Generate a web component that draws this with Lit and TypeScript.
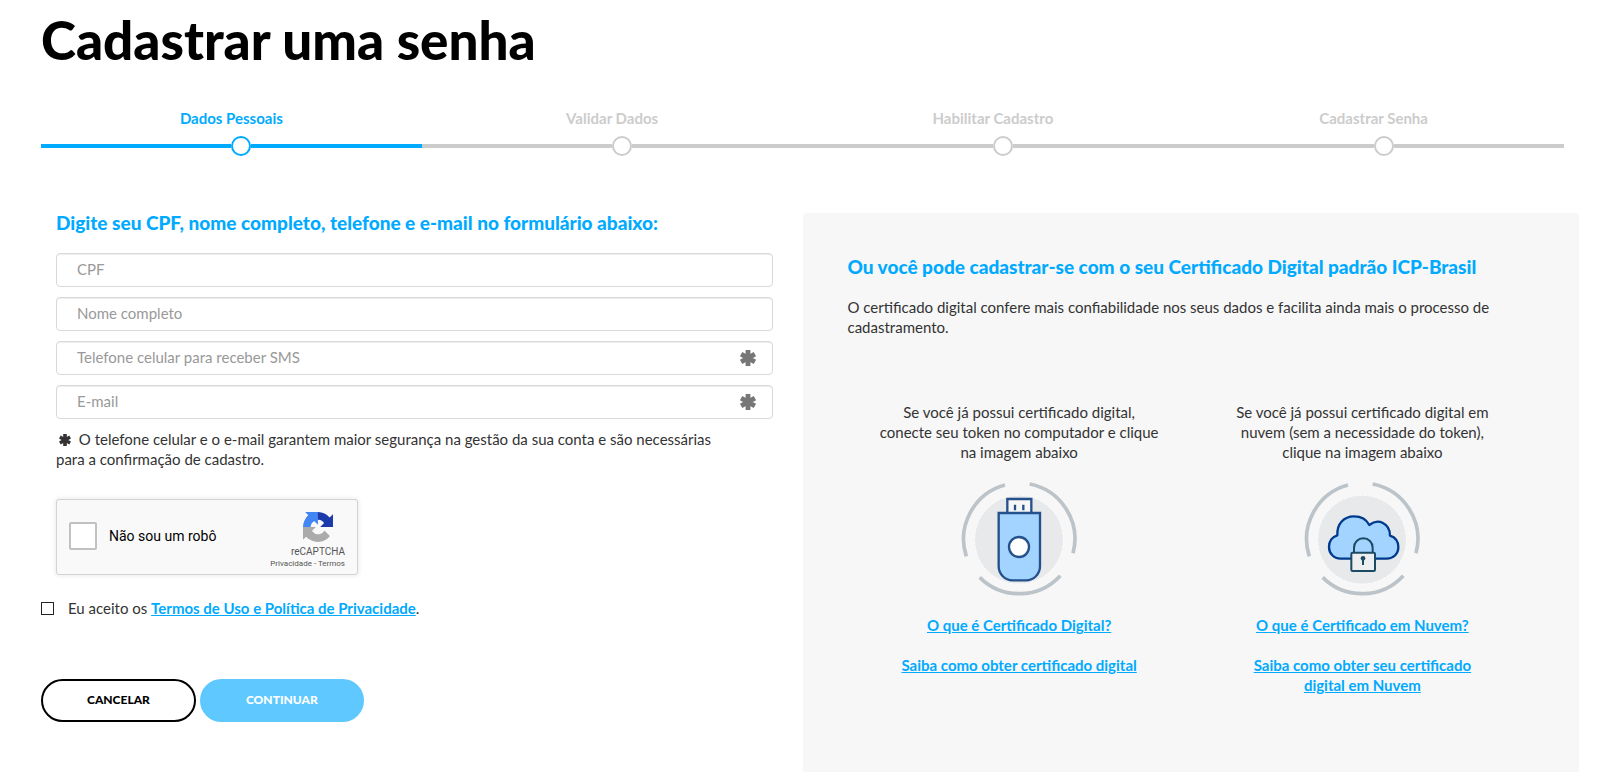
import { LitElement, html, css, svg } from "lit";
import { customElement, property, state } from "lit/decorators.js";
import { classMap } from "lit/directives/class-map.js";

const asterisk = (size: number) => html`
  <svg class="asterisk" width=${size} height=${size} viewBox="0 0 16 16" aria-hidden="true">
    <path d="M8 0V16M1.1 4L14.9 12M14.9 4L1.1 12" fill="none" stroke="currentColor" stroke-width="4.8" />
  </svg>
`;

@customElement("step-bar")
class StepBar extends LitElement {
  @property({ type: Array }) steps: string[] = [];
  @property({ type: Number }) current = 0;

  static styles = css`
    :host { display: block; }
    .steps {
      display: grid;
      grid-auto-flow: column;
      grid-auto-columns: 1fr;
      margin: 0;
      padding: 0;
      list-style: none;
    }
    .step {
      color: #ccc;
      font-size: 15px;
      font-weight: 700;
      line-height: 20px;
      text-align: center;
    }
    .track {
      display: flex;
      align-items: center;
      height: 20px;
      margin-top: 8px;
    }
    .track::before, .track::after {
      content: "";
      height: 4px;
      background: currentColor;
    }
    .track::before { width: 50%; }
    .track::after { flex: 1; }
    .dot {
      box-sizing: border-box;
      width: 20px;
      height: 20px;
      border: 2px solid currentColor;
      border-radius: 50%;
      background: #fff;
    }
    .active { color: #0af; }
  `;

  render() {
    return html`<ol class="steps">
      ${this.steps.map((name, i) => html`
        <li class=${classMap({ step: true, active: i === this.current })}>
          ${name}
          <div class="track"><span class="dot"></span></div>
        </li>`)}
    </ol>`;
  }
}

@customElement("captcha-box")
class CaptchaBox extends LitElement {
  static styles = css`
    :host { display: block; }
    .box {
      box-sizing: border-box;
      display: flex;
      align-items: center;
      width: 302px;
      height: 76px;
      padding: 0 12px;
      border: 1px solid #d3d3d3;
      border-radius: 3px;
      background: #f9f9f9;
      box-shadow: 0 0 4px 1px rgba(0, 0, 0, 0.08);
      font-family: Roboto, "Liberation Sans", sans-serif;
    }
    .check {
      display: flex;
      flex: 1;
      align-items: center;
      gap: 12px;
      padding-bottom: 2px;
      color: #000;
      font-size: 14px;
      line-height: 16px;
    }
    .tick {
      appearance: none;
      box-sizing: border-box;
      width: 28px;
      height: 28px;
      margin: 0;
      border: 2px solid #c1c1c1;
      border-radius: 2px;
      background: #fff;
    }
    .brand {
      display: flex;
      flex-direction: column;
      align-items: flex-end;
      color: #555;
    }
    .logo { margin: 8px 12px 4px 0; }
    .name { font-size: 10px; line-height: 12px; }
    .legal { font-size: 8px; line-height: 12px; }
    .legal a { color: inherit; text-decoration: none; }
  `;

  render() {
    return html`<div class="box">
      <label class="check"><input class="tick" type="checkbox" />Não sou um robô</label>
      <div class="brand">
        <svg class="logo" width="30" height="30" viewBox="0 0 64 64" aria-hidden="true">
          <path fill="#1c3aa9" d="M64 31.955l-.033-1.37V4.687l-7.16 7.16C50.948 4.674 42.033.093 32.05.093c-10.4 0-19.622 4.96-25.458 12.64l11.736 11.86a15.55 15.55 0 0 1 4.754-5.334c2.05-1.6 4.952-2.906 8.968-2.906.485 0 .86.057 1.135.163 4.976.393 9.288 3.14 11.828 7.124l-8.307 8.307L64 31.953" />
          <path fill="#4285f4" d="M31.862.094l-1.37.033H4.594l7.16 7.16C4.58 13.147 0 22.06 0 32.046c0 10.4 4.96 19.622 12.64 25.458L24.5 45.768a15.55 15.55 0 0 1-5.334-4.754c-1.6-2.05-2.906-4.952-2.906-8.968 0-.485.057-.86.163-1.135.393-4.976 3.14-9.288 7.124-11.828l8.307 8.307L31.86.095" />
          <path fill="#ababab" d="M.001 32.045l.033 1.37v25.898l7.16-7.16c5.86 7.173 14.774 11.754 24.76 11.754 10.4 0 19.622-4.96 25.458-12.64l-11.736-11.86a15.55 15.55 0 0 1-4.754 5.334c-2.05 1.6-4.952 2.906-8.968 2.906-.485 0-.86-.057-1.135-.163-4.976-.393-9.288-3.14-11.828-7.124l8.307-8.307c-10.522.04-22.4.066-27.295-.005" />
        </svg>
        <span class="name">reCAPTCHA</span>
        <span class="legal"><a href="#privacidade">Privacidade</a> - <a href="#termos">Termos</a></span>
      </div>
    </div>`;
  }
}

const badge = svg`
  <circle cx="206" cy="210" r="133" fill="#e7e9eb" stroke="#fff" stroke-width="2" stroke-dasharray="10 5" />
  <path d="M164 46A168 168 0 0 0 48 260M238 43A168 168 0 0 1 368 251M88 323A168 168 0 0 0 330 318"
    fill="none" stroke="#bcc4c9" stroke-width="11" />
`;

const tokenIcon = html`
  <svg width="118" height="118" viewBox="29 31 354 354" aria-hidden="true">
    ${badge}
    <g stroke="#24508c" stroke-width="7">
      <path d="M171 129V88H243V129" fill="#f7f7f7" />
      <path d="M145 130H269V290A42 42 0 0 1 227 332H187A42 42 0 0 1 145 290Z" fill="#a3d3ff" />
      <circle cx="206" cy="232" r="30" fill="#fff" />
      <path d="M194 105V122M219 105V122" />
    </g>
  </svg>
`;

const cloudIcon = html`
  <svg width="118" height="118" viewBox="37 31 354 354" aria-hidden="true">
    <g transform="translate(8 0)">${badge}</g>
    <path d="M150 267C128 267 115 250 115 232C115 215 125 201 140 197C138 162 160 140 190 140C210 140 228 150 236 166C262 145 298 160 298 198C314 203 323 216 323 233C323 253 308 267 288 267Z"
      fill="#a3d3ff" stroke="#003a8c" stroke-width="7" stroke-linejoin="round" />
    <path d="M190 249V234A28 28 0 0 1 246 234V249" fill="none" stroke="#1c4a63" stroke-width="6" />
    <rect x="182" y="249" width="71" height="55" rx="4" fill="#eceef0" stroke="#1c4a63" stroke-width="6" />
    <circle cx="217" cy="266" r="7" fill="#1c4a63" />
    <path d="M217 266V286" stroke="#1c4a63" stroke-width="6" />
  </svg>
`;

@customElement("app-root")
class AppRoot extends LitElement {
  @state() private fields = [
    { name: "cpf", text: "CPF", type: "text", starred: false },
    { name: "nome", text: "Nome completo", type: "text", starred: false },
    { name: "telefone", text: "Telefone celular para receber SMS", type: "tel", starred: true },
    { name: "email", text: "E-mail", type: "email", starred: true },
  ];

  static styles = css`
    :host {
      display: block;
      min-height: 100vh;
      background: #fff;
      color: #333;
      font-family: Lato, "Open Sans", sans-serif;
      font-size: 15px;
      line-height: 20px;
    }
    .page {
      box-sizing: border-box;
      display: flex;
      flex-direction: column;
      min-height: 100vh;
      padding: 12px 27px 0 26px;
    }
    .title {
      margin: 0 15px 40px;
      color: #000;
      font-size: 53px;
      font-weight: 900;
      line-height: 56px;
    }
    .progress { margin: 0 15px 57px; }
    .columns {
      display: grid;
      flex: 1;
      grid-template-columns: 1fr 1fr;
    }
    .form { padding: 0 30px 0 15px; }
    .group { padding-left: 15px; }
    .heading {
      margin: 0;
      color: #0af;
      font-size: 19px;
      font-weight: 900;
      line-height: 20px;
    }
    .fields {
      display: flex;
      flex-direction: column;
      gap: 10px;
      margin: 20px 0 10px;
    }
    .field { position: relative; display: block; }
    .input {
      box-sizing: border-box;
      display: block;
      width: 100%;
      height: 34px;
      padding: 0 20px 2px;
      border: 1px solid #d9d9d9;
      border-radius: 4px;
      box-shadow: inset 0 1px 1px rgba(0, 0, 0, 0.075);
      color: #555;
      font: inherit;
    }
    .input::placeholder { color: #999; opacity: 1; }
    .star {
      position: absolute;
      top: 0;
      right: 17px;
      display: flex;
      align-items: center;
      height: 34px;
      color: #777;
    }
    .note { margin: 0 0 30px; }
    .note .asterisk { margin: 0 4px 0 3px; vertical-align: -1px; }
    .terms {
      display: flex;
      align-items: center;
      gap: 14px;
      margin: 23px 0 61px;
    }
    .accept {
      appearance: none;
      box-sizing: border-box;
      width: 13px;
      height: 13px;
      margin: 0;
      border: 1px solid #222;
      background: #fff;
    }
    .link {
      color: #0af;
      font-weight: 700;
      text-decoration: underline;
    }
    .actions { display: flex; gap: 4px; }
    .button {
      height: 43px;
      padding: 0 44px 2px;
      border: 2px solid #000;
      border-radius: 22px;
      background: #fff;
      color: #000;
      font: inherit;
      font-size: 12px;
      font-weight: 900;
    }
    .primary { border-color: #5ec8ff; background: #5ec8ff; color: #fff; }
    .panel {
      padding: 44px 45px 0;
      border-radius: 4px 4px 0 0;
      background: #f7f7f7;
    }
    .lead { margin: 20px 0 65px; }
    .options {
      display: grid;
      grid-template-columns: 1fr 1fr;
      text-align: center;
    }
    .option { display: flex; flex-direction: column; align-items: center; }
    .caption { margin: 0 0 18px; }
    .picture { display: block; height: 118px; padding: 0; border: 0; background: none; }
    .more { margin: 17px 0 0; }
    .more + .more { margin-top: 20px; }
  `;

  render() {
    return html`<main class="page">
      <h1 class="title">Cadastrar uma senha</h1>
      <step-bar class="progress" .current=${0}
        .steps=${["Dados Pessoais", "Validar Dados", "Habilitar Cadastro", "Cadastrar Senha"]}></step-bar>
      <div class="columns">
        <form class="form">
          <div class="group">
            <h2 class="heading">Digite seu CPF, nome completo, telefone e e-mail no formulário abaixo:</h2>
            <div class="fields">
              ${this.fields.map((f) => html`
                <label class="field">
                  <input class="input" type=${f.type} name=${f.name} placeholder=${f.text} aria-label=${f.text} />
                  ${f.starred ? html`<span class="star">${asterisk(16)}</span>` : ""}
                </label>`)}
            </div>
            <p class="note">${asterisk(12)}O telefone celular e o e-mail garantem maior segurança na gestão da sua conta e são necessárias<br />para a confirmação de cadastro.</p>
            <captcha-box></captcha-box>
          </div>
          <div class="terms">
            <input class="accept" id="accept" type="checkbox" />
            <label for="accept">Eu aceito os <a class="link" href="#termos">Termos de Uso e Política de Privacidade</a>.</label>
          </div>
          <div class="actions">
            <button class="button" type="button">CANCELAR</button>
            <button class="button primary" type="button">CONTINUAR</button>
          </div>
        </form>
        <section class="panel">
          <h2 class="heading">Ou você pode cadastrar-se com o seu Certificado Digital padrão ICP-Brasil</h2>
          <p class="lead">O certificado digital confere mais confiabilidade nos seus dados e facilita ainda mais o processo de<br />cadastramento.</p>
          <div class="options">
            <div class="option">
              <p class="caption">Se você já possui certificado digital,<br />conecte seu token no computador e clique<br />na imagem abaixo</p>
              <button class="picture" type="button" aria-label="Certificado digital">${tokenIcon}</button>
              <p class="more"><a class="link" href="#certificado">O que é Certificado Digital?</a></p>
              <p class="more"><a class="link" href="#obter">Saiba como obter certificado digital</a></p>
            </div>
            <div class="option">
              <p class="caption">Se você já possui certificado digital em<br />nuvem (sem a necessidade do token),<br />clique na imagem abaixo</p>
              <button class="picture" type="button" aria-label="Certificado em nuvem">${cloudIcon}</button>
              <p class="more"><a class="link" href="#nuvem">O que é Certificado em Nuvem?</a></p>
              <p class="more"><a class="link" href="#obter-nuvem">Saiba como obter seu certificado<br />digital em Nuvem</a></p>
            </div>
          </div>
        </section>
      </div>
    </main>`;
  }
}
